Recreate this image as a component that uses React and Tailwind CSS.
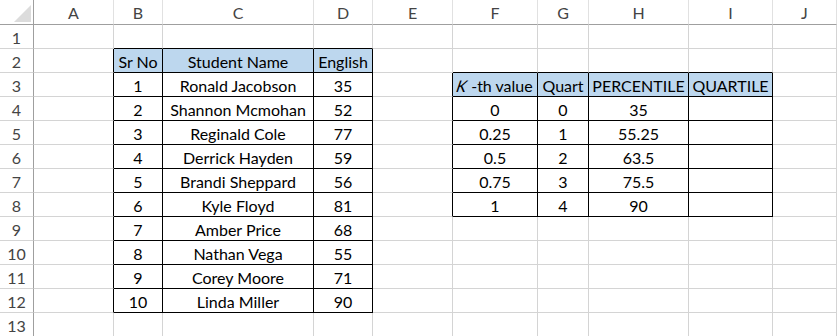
import React from "react";

const COLS = ["", "A", "B", "C", "D", "E", "F", "G", "H", "I", "J"];

const names = [
  "Ronald Jacobson",
  "Shannon Mcmohan",
  "Reginald Cole",
  "Derrick Hayden",
  "Brandi Sheppard",
  "Kyle Floyd",
  "Amber Price",
  "Nathan Vega",
  "Corey Moore",
  "Linda Miller",
];
const scores = [35, 52, 77, 59, 56, 81, 68, 55, 71, 90];
const t2 = [
  ["0", "0", "35", ""],
  ["0.25", "1", "55.25", ""],
  ["0.5", "2", "63.5", ""],
  ["0.75", "3", "75.5", ""],
  ["1", "4", "90", ""],
];

function inTable(r, c) {
  if (r >= 2 && r <= 12 && c >= 2 && c <= 4) return true;
  if (r >= 3 && r <= 8 && c >= 6 && c <= 9) return true;
  return false;
}

function isHead(r, c) {
  return (r === 2 && c >= 2 && c <= 4) || (r === 3 && c >= 6 && c <= 9);
}

function content(r, c) {
  if (r === 2) {
    if (c === 2) return "Sr No";
    if (c === 3) return "Student Name";
    if (c === 4) return "English";
  }
  if (r >= 3 && r <= 12) {
    if (c === 2) return String(r - 2);
    if (c === 3) return names[r - 3];
    if (c === 4) return String(scores[r - 3]);
  }
  if (r === 3) {
    if (c === 6)
      return (
        <>
          <span className="inline-block italic -skew-x-12 mr-[4px]">K</span>
          <span>-th value</span>
        </>
      );
    if (c === 7) return "Quart";
    if (c === 8) return "PERCENTILE";
    if (c === 9) return "QUARTILE";
  }
  if (r >= 4 && r <= 8 && c >= 6 && c <= 9) return t2[r - 4][c - 6];
  return "";
}

function Cell({ r, c }) {
  const rb = inTable(r, c) || inTable(r, c + 1);
  const bb = inTable(r, c) || inTable(r + 1, c);
  const cls = [
    "h-[24px] flex items-end justify-center pb-[1px] overflow-visible whitespace-nowrap text-[16px] leading-[19px] text-black border-r border-b",
    rb ? "border-r-black" : "border-r-[#d4d4d4]",
    bb ? "border-b-black" : "border-b-[#d4d4d4]",
    isHead(r, c) ? "bg-[#bdd7ee]" : "bg-white",
  ].join(" ");
  return <div className={cls}>{content(r, c)}</div>;
}

export default function App() {
  const rows = [];
  for (let r = 1; r <= 13; r++) rows.push(r);
  return (
    <div
      className="w-[837px] h-[336px] overflow-hidden bg-white"
      style={{ fontFamily: "Lato, 'Open Sans', sans-serif" }}
    >
      <div className="grid grid-cols-[34px_80px_49px_151px_59px_80px_85px_51px_100px_84px_1fr]">
        {/* header row */}
        <div className="h-[25px] border-r border-b border-r-[#9f9f9f] border-b-[#9f9f9f] relative">
          <svg
            className="absolute left-[14px] top-[5px]"
            width="18"
            height="18"
            viewBox="0 0 18 18"
          >
            <polygon points="17,0 17,17 0,17" fill="#dcdcdc" />
          </svg>
        </div>
        {COLS.slice(1).map((l) => (
          <div
            key={l}
            className="h-[25px] flex items-end justify-center pb-[2px] text-[16px] leading-[19px] text-[#444] border-r border-b border-r-[#e1e1e1] border-b-[#9f9f9f]"
          >
            {l}
          </div>
        ))}
        {rows.map((r) => (
          <React.Fragment key={r}>
            <div className="h-[24px] flex items-end justify-center pb-[1px] text-[16px] leading-[19px] text-[#444] border-r border-b border-r-[#9f9f9f] border-b-[#d4d4d4]">
              {r}
            </div>
            {COLS.slice(1).map((l, i) => (
              <Cell key={l} r={r} c={i + 1} />
            ))}
          </React.Fragment>
        ))}
      </div>
    </div>
  );
}
